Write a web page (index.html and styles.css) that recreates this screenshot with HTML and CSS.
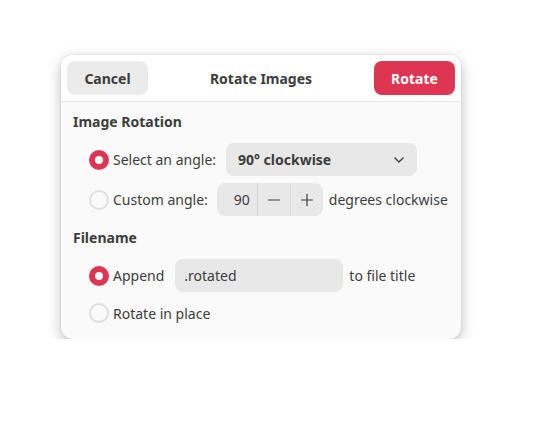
FILE: index.html
```html
<!DOCTYPE html>
<html lang="en">
<head>
  <meta charset="UTF-8">
  <title>Rotate Images</title>
  <link rel="stylesheet" href="styles.css">
</head>
<body>

<div class="dialog">
  <div class="header">
    <button class="btn">Cancel</button>
    <div class="title">Rotate Images</div>
    <button class="btn accent">Rotate</button>
  </div>

  <div class="content">
    <div class="group-title">Image Rotation</div>

    <div class="row">
      <span class="radio checked"></span>
      <span class="label">Select an angle:</span>
      <div class="dropdown">
        <span>90° clockwise</span>
        <svg width="12" height="8" viewBox="0 0 12 8"><path d="M1.5 1.5 6 6l4.5-4.5" fill="none" stroke="#3d3d3d" stroke-width="1.3"/></svg>
      </div>
    </div>

    <div class="row">
      <span class="radio"></span>
      <span class="label">Custom angle:</span>
      <div class="spin">
        <span class="spin-value">90</span>
        <span class="spin-btn">
          <svg width="14" height="14" viewBox="0 0 14 14"><path d="M1 7h12" stroke="#3d3d3d" stroke-width="1.2"/></svg>
        </span>
        <span class="spin-btn">
          <svg width="14" height="14" viewBox="0 0 14 14"><path d="M1 7h12M7 1v12" stroke="#3d3d3d" stroke-width="1.2"/></svg>
        </span>
      </div>
      <span class="label">degrees clockwise</span>
    </div>

    <div class="group-title second">Filename</div>

    <div class="row">
      <span class="radio checked"></span>
      <span class="label">Append</span>
      <div class="entry">.rotated</div>
      <span class="label">to file title</span>
    </div>

    <div class="row short">
      <span class="radio"></span>
      <span class="label">Rotate in place</span>
    </div>
  </div>
</div>

</body>
</html>
```

FILE: styles.css
```css
* { box-sizing: border-box; margin: 0; padding: 0; }
body {
  font-family: "Noto Sans", "Open Sans", sans-serif;
  font-size: 14px;
  color: #3d3d3d;
  background: #fff;
  padding: 55px 0 0 61px;
}
.dialog {
  width: 400px;
  background: #fafafa;
  border-radius: 12px;
  box-shadow: 0 4px 14px rgba(0,0,0,0.26), 0 0 0 1px rgba(0,0,0,0.03);
  overflow: hidden;
}
.header {
  display: flex;
  align-items: center;
  justify-content: space-between;
  height: 47px;
  padding: 0 6px;
  background: #fff;
  border-bottom: 1px solid #e6e6e6;
}
.title { font-weight: bold; }
.btn {
  width: 81px;
  height: 34px;
  border: none;
  border-radius: 8px;
  background: #ebebeb;
  color: #3d3d3d;
  font-family: inherit;
  font-size: 14px;
  font-weight: bold;
}
.btn.accent {
  background: #de3553;
  color: #fff;
}

.content {
  padding: 10px 12px 9px;
}
.group-title {
  font-weight: bold;
  line-height: 20px;
  margin-bottom: 11px;
}
.group-title.second { margin-top: 12px; }
.row {
  display: flex;
  align-items: center;
  gap: 10px;
  height: 33px;
  margin: 0 0 7px 16px;
  white-space: nowrap;
}
.row.short { height: 34px; margin-bottom: 0; margin-top: -3px; }
.label { flex: none; }
.radio {
  width: 20px;
  height: 20px;
  border-radius: 50%;
  border: 2px solid #dedede;
  margin-right: -6px;
  flex: none;
}
.radio.checked {
  border: 6.5px solid #de3553;
  background: #fff;
}
.dropdown {
  display: flex;
  align-items: center;
  justify-content: space-between;
  flex: none;
  width: 191px;
  height: 33px;
  padding: 0 12px;
  border-radius: 8px;
  background: #e8e8e8;
  font-weight: bold;
}
.spin {
  display: flex;
  flex: none;
  height: 33px;
  margin-left: -1px;
  border-radius: 8px;
  background: #e8e8e8;
  overflow: hidden;
}
.spin-value {
  width: 40px;
  line-height: 33px;
  text-align: right;
  padding-right: 7px;
}
.spin-btn {
  width: 33px;
  display: flex;
  align-items: center;
  justify-content: center;
  border-left: 1px solid #d8d8d8;
}
.spin + .label,
.entry + .label { margin-left: -4px; }
.entry {
  flex: none;
  width: 168px;
  height: 33px;
  line-height: 33px;
  margin-left: 1px;
  padding: 0 9px;
  border-radius: 8px;
  background: #e8e8e8;
}
```
